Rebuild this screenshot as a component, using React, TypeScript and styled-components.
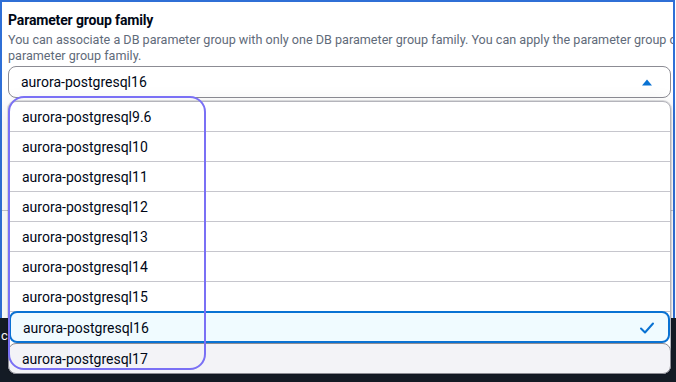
import React from "react";
import styled, { createGlobalStyle } from "styled-components";

const GlobalStyle = createGlobalStyle`
  html, body {
    margin: 0;
    padding: 0;
    background: #ffffff;
  }
  body {
    width: 676px;
    height: 382px;
    overflow: hidden;
    font-family: Roboto, "Open Sans", "Liberation Sans", sans-serif;
    color: #000716;
  }
`;

const colors = {
  text: "#000716",
  muted: "#5f6b7a",
  blue: "#0972d3",
  border: "#8c8c94",
  divider: "#c6c6cd",
  frame: "#2f6fd6",
  annotate: "#7a70f5",
  dark: "#151c26",
};

const Page = styled.div`
  width: 676px;
  height: 382px;
  display: flex;
  flex-direction: column;
  overflow: hidden;
`;

const Panel = styled.div`
  width: 675px;
  height: 318px;
  box-sizing: border-box;
  border: 2px solid ${colors.frame};
  border-bottom: none;
  padding: 9px 0 0 6px;
  background: #ffffff;
  flex-shrink: 0;
`;

const Field = styled.div`
  display: flex;
  flex-direction: column;
`;

const Label = styled.div`
  font-size: 14px;
  font-weight: 700;
  line-height: 18px;
  letter-spacing: -0.15px;
  color: ${colors.text};
`;

const Description = styled.div`
  margin-top: 3px;
  font-size: 12.6px;
  line-height: 15.5px;
  color: ${colors.muted};
  white-space: nowrap;
  overflow: hidden;
`;

const SelectWrap = styled.div`
  position: relative;
  margin-top: 3px;
  width: 663px;
`;

const Trigger = styled.div`
  height: 32px;
  box-sizing: border-box;
  border: 1px solid ${colors.border};
  border-radius: 8px;
  display: flex;
  align-items: center;
  justify-content: space-between;
  padding: 0 17px 0 12px;
  font-size: 14px;
  color: ${colors.text};
`;

const Menu = styled.ul`
  position: absolute;
  top: 35px;
  left: 0;
  width: 100%;
  margin: 0;
  padding: 0;
  list-style: none;
  box-sizing: border-box;
  background: #ffffff;
  border: 1px solid #b4b4bb;
  border-radius: 8px;
  box-shadow: 0 0 0 1px rgba(0, 7, 22, 0.12), 0 4px 20px 1px rgba(0, 7, 22, 0.1);
  z-index: 2;
`;

const Option = styled.li<{ $state?: "selected" | "hover" }>`
  height: 30px;
  box-sizing: border-box;
  display: flex;
  align-items: center;
  justify-content: space-between;
  padding: 0 ${(p) => (p.$state === "selected" ? "13px" : "14px")} 0
    ${(p) => (p.$state === "selected" ? "12px" : "13px")};
  font-size: 14px;
  color: ${colors.text};
  border-bottom: 1px solid ${colors.divider};

  ${(p) =>
    p.$state === "selected" &&
    `
    height: 32px;
    margin-top: -1px;
    padding-top: 1px;
    border: 2px solid ${colors.blue};
    border-radius: 8px;
    background: #f0fbff;
  `}

  ${(p) =>
    p.$state === "hover" &&
    `
    height: 31px;
    margin: 0 -1px -1px;
    border: 1px solid ${colors.border};
    border-radius: 8px;
    background: #f3f3f7;
  `}
`;

const Highlight = styled.div`
  position: absolute;
  top: 30px;
  left: 0;
  width: 198px;
  height: 274px;
  box-sizing: border-box;
  border: 2px solid ${colors.annotate};
  border-radius: 16px;
  pointer-events: none;
  z-index: 3;
`;

const Divider = styled.div`
  margin: 112px 0 0 -6px;
  border-top: 1px solid ${colors.divider};
`;

const Footer = styled.div`
  flex: 1;
  background: ${colors.dark};
  padding: 7px 0 0 1px;
`;

const FooterText = styled.span`
  font-size: 13px;
  color: #ffffff;
`;

const CaretUp = () => (
  <svg width="12" height="8" viewBox="0 0 12 8">
    <path d="M1 7.5 L6 1.5 L11 7.5 Z" fill={colors.blue} />
  </svg>
);

const Check = () => (
  <svg width="16" height="16" viewBox="0 0 16 16" fill="none">
    <path
      d="M2 8.5 L6 12.5 L14 3.5"
      stroke={colors.blue}
      strokeWidth="2"
      strokeLinecap="round"
      strokeLinejoin="round"
    />
  </svg>
);

const versions = ["9.6", "10", "11", "12", "13", "14", "15", "16", "17"];
const selected = "16";
const hovered = "17";

export default function App() {
  return (
    <>
      <GlobalStyle />
      <Page>
        <Panel>
          <Field>
            <Label>Parameter group family</Label>
            <Description>
              You can associate a DB parameter group with only one DB parameter group family. You can
              apply the parameter group only to DB instances that run database engines of that
              <br />
              parameter group family.
            </Description>
            <SelectWrap>
              <Trigger>
                <span>aurora-postgresql16</span>
                <CaretUp />
              </Trigger>
              <Menu>
                {versions.map((v) => (
                  <Option
                    key={v}
                    $state={v === selected ? "selected" : v === hovered ? "hover" : undefined}
                  >
                    <span>aurora-postgresql{v}</span>
                    {v === selected && <Check />}
                  </Option>
                ))}
              </Menu>
              <Highlight />
            </SelectWrap>
          </Field>
          <Divider />
        </Panel>
        <Footer>
          <FooterText>c</FooterText>
        </Footer>
      </Page>
    </>
  );
}
